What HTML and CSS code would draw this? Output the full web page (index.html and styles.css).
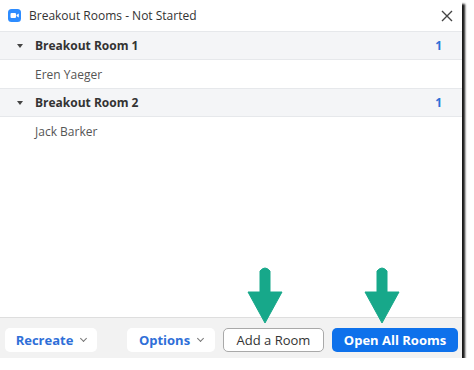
FILE: index.html
```html
<!DOCTYPE html>
<html lang="en">
<head>
    <meta charset="UTF-8">
    <title>Breakout Rooms - Not Started</title>
    <link rel="stylesheet" href="styles.css">
</head>
<body>
    <div class="window">
        <div class="titlebar">
            <svg class="logo" width="13" height="13" viewBox="0 0 13 13">
                <rect width="13" height="13" rx="3.5" fill="#2d8cff"/>
                <rect x="2.5" y="4" width="5.5" height="5" rx="1" fill="#fff"/>
                <path d="M8.5 6 L10.8 4.4 V8.6 L8.5 7 Z" fill="#fff"/>
            </svg>
            <span class="title">Breakout Rooms - Not Started</span>
            <svg class="close" width="12" height="12" viewBox="0 0 12 12">
                <path d="M1 1 L11 11 M11 1 L1 11" stroke="#444" stroke-width="1.4"/>
            </svg>
        </div>

        <div class="rooms">
            <div class="room-head">
                <span class="caret"></span>
                <span class="room-name">Breakout Room 1</span>
                <span class="count">1</span>
            </div>
            <div class="member">Eren Yaeger</div>
            <div class="room-head">
                <span class="caret"></span>
                <span class="room-name">Breakout Room 2</span>
                <span class="count">1</span>
            </div>
            <div class="member">Jack Barker</div>
        </div>

        <div class="footer">
            <button class="btn menu-btn recreate">Recreate <span class="chev"></span></button>
            <button class="btn menu-btn options">Options <span class="chev"></span></button>
            <button class="btn plain-btn">Add a Room</button>
            <button class="btn primary-btn">Open All Rooms</button>

            <svg class="arrow arrow-one" width="36" height="57" viewBox="0 0 36 57">
                <path d="M13 4 Q18 -2 23 4 L23 25 L35 25 L18 56 L1 25 L13 25 Z" fill="#17a88a" stroke="#17a88a" stroke-linejoin="round" stroke-width="1"/>
            </svg>
            <svg class="arrow arrow-two" width="36" height="57" viewBox="0 0 36 57">
                <path d="M13 4 Q18 -2 23 4 L23 25 L35 25 L18 56 L1 25 L13 25 Z" fill="#17a88a" stroke="#17a88a" stroke-linejoin="round" stroke-width="1"/>
            </svg>
        </div>
    </div>
</body>
</html>
```

FILE: styles.css
```css
body {
    margin: 0;
    background-color: #fff;
    font-family: 'Open Sans', 'Noto Sans', sans-serif;
}

.window {
    position: relative;
    width: 462px;
    height: 358px;
    background-color: #fff;
    display: flex;
    flex-direction: column;
    box-shadow: 3px 4px 2px rgba(0, 0, 0, 0.9);
}

.titlebar {
    height: 31px;
    display: flex;
    align-items: center;
    padding: 0 8px;
    box-sizing: border-box;
}

.logo {
    margin-right: 8px;
}

.title {
    font-size: 12px;
    color: #333;
    flex: 1;
}

.close {
    margin-right: 1px;
}

.rooms {
    flex: 1;
}

.room-head {
    height: 29px;
    display: flex;
    align-items: center;
    background-color: #f4f5f7;
    border-top: 1px solid #e6e8eb;
    border-bottom: 1px solid #e6e8eb;
    padding: 0 20px 0 17px;
    box-sizing: border-box;
}

.caret {
    width: 0;
    height: 0;
    border-left: 3px solid transparent;
    border-right: 3px solid transparent;
    border-top: 4px solid #444;
    margin-right: 12px;
}

.room-name {
    flex: 1;
    font-size: 12px;
    font-weight: bold;
    color: #333;
}

.count {
    font-size: 12px;
    font-weight: bold;
    color: #2d6fd6;
}

.member {
    height: 28px;
    display: flex;
    align-items: center;
    padding-left: 35px;
    font-size: 12px;
    color: #555;
}

.footer {
    height: 41px;
    display: flex;
    align-items: center;
    padding: 4px 4px 0 5px;
    box-sizing: border-box;
    background-color: #f2f2f2;
    border-top: 1px solid #dedede;
}

.btn {
    height: 24px;
    font-family: inherit;
    font-size: 13px;
    border-radius: 5px;
    border: none;
    padding: 0;
    display: flex;
    align-items: center;
    justify-content: center;
}

.menu-btn {
    background-color: #fff;
    color: #2f6fd8;
    font-weight: bold;
}

.recreate {
    width: 92px;
}

.options {
    width: 88px;
    margin-left: 30px;
}

.chev {
    width: 4px;
    height: 4px;
    border-right: 1.3px solid #777;
    border-bottom: 1.3px solid #777;
    transform: rotate(45deg);
    margin: -3px 0 0 8px;
}

.plain-btn {
    width: 101px;
    margin-left: 8px;
    background-color: #fff;
    border: 1px solid #a9a9a9;
    color: #333;
}

.primary-btn {
    width: 126px;
    margin-left: 8px;
    background-color: #0e71eb;
    color: #fff;
    font-weight: bold;
}

.arrow {
    position: absolute;
    top: 267px;
}

.arrow-one {
    left: 247px;
}

.arrow-two {
    left: 364px;
}
```
